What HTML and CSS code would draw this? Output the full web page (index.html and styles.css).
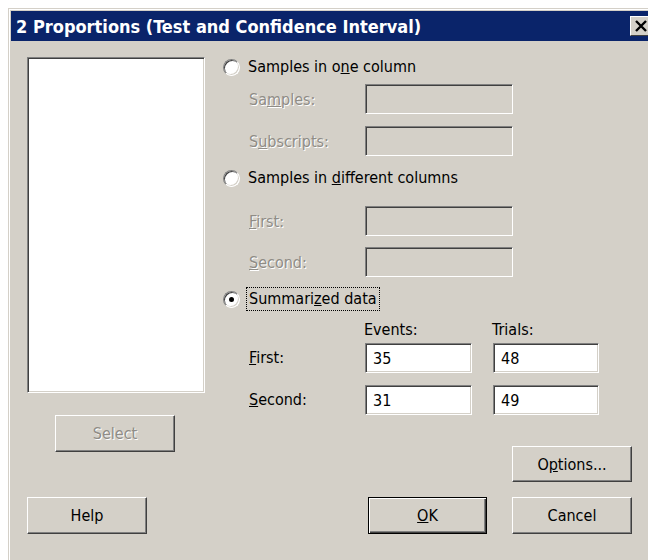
FILE: index.html
```html
<!DOCTYPE html>
<html lang="en">
<head>
<meta charset="utf-8">
<title>2 Proportions (Test and Confidence Interval)</title>
<link rel="stylesheet" href="styles.css">
</head>
<body>
<div class="window">
  <div class="frame">
    <div class="titlebar">
      <span class="title">2 Proportions (Test and Confidence Interval)</span>
      <span class="close-btn">
        <svg width="14" height="12" viewBox="0 0 14 12"><path d="M2 1 L12 11 M12 1 L2 11" stroke="#000" stroke-width="2.4" fill="none"/></svg>
      </span>
    </div>
    <div class="client">
      <div class="main">
        <div class="left">
          <div class="listbox"></div>
          <button class="btn btn-select" disabled><span class="etched">Select</span></button>
        </div>
        <div class="right">
          <div class="option opt-one">
            <span class="radio"></span>
            <span class="option-text">Samples in o<u>n</u>e column</span>
          </div>
          <div class="field field-samples">
            <span class="label etched">Sa<u>m</u>ples:</span>
            <span class="edit edit-disabled"></span>
          </div>
          <div class="field field-subscripts">
            <span class="label etched">S<u>u</u>bscripts:</span>
            <span class="edit edit-disabled"></span>
          </div>
          <div class="option opt-diff">
            <span class="radio"></span>
            <span class="option-text">Samples in <u>d</u>ifferent columns</span>
          </div>
          <div class="field field-first">
            <span class="label etched"><u>F</u>irst:</span>
            <span class="edit edit-disabled"></span>
          </div>
          <div class="field field-second">
            <span class="label etched"><u>S</u>econd:</span>
            <span class="edit edit-disabled"></span>
          </div>
          <div class="option opt-sum">
            <span class="radio radio-checked"></span>
            <span class="option-text focused">Summari<u>z</u>ed data</span>
          </div>
          <div class="summary">
            <span></span>
            <span class="col-head">Events:</span>
            <span class="col-head">Trials:</span>
            <span class="label"><u>F</u>irst:</span>
            <span class="edit">35</span>
            <span class="edit">48</span>
            <span class="label row2"><u>S</u>econd:</span>
            <span class="edit row2">31</span>
            <span class="edit row2">49</span>
          </div>
          <button class="btn btn-options">O<u>p</u>tions...</button>
        </div>
      </div>
      <div class="footer">
        <button class="btn">Help</button>
        <button class="btn btn-default"><u>O</u>K</button>
        <button class="btn">Cancel</button>
      </div>
    </div>
  </div>
</div>
</body>
</html>
```

FILE: styles.css
```css
html, body {
  margin: 0;
  padding: 0;
  background: #ffffff;
  overflow: hidden;
}

body {
  font-family: "DejaVu Sans Condensed", "DejaVu Sans", sans-serif;
  font-stretch: condensed;
  font-size: 16px;
  color: #000;
}

/* window chrome */
.window {
  margin: 8px 0 0 8px;
  width: 639px;
  height: 551px;
  overflow: hidden;
  background: #d4d0c8;
  border-top: 1px solid #d4d0c8;
  border-left: 1px solid #d4d0c8;
}

.frame {
  height: 100%;
  box-sizing: border-box;
  border-top: 1px solid #ffffff;
  border-left: 1px solid #ffffff;
  padding: 1px 0 0 1px;
}

.titlebar {
  height: 30px;
  background: #0a246a;
  display: flex;
  align-items: center;
  padding-left: 5px;
  overflow: hidden;
}

.title {
  color: #fff;
  font-weight: bold;
  font-size: 18px;
  white-space: nowrap;
}

/* close box, partly cut off by the window edge */
.close-btn {
  margin-left: auto;
  margin-right: -4px;
  width: 22px;
  height: 20px;
  flex: none;
  box-sizing: border-box;
  background: #d4d0c8;
  border: 1px solid;
  border-color: #fff #404040 #404040 #fff;
  display: flex;
  align-items: center;
  padding-left: 3px;
}

/* client area */
.client {
  padding: 16px 0 0 16px;
}

.main {
  width: 605px;
  display: flex;
  gap: 18px;
}

.left {
  width: 178px;
  display: flex;
  flex-direction: column;
}

.listbox {
  height: 336px;
  box-sizing: border-box;
  background: #fff;
  border: 1px solid;
  border-color: #808080 #fff #fff #808080;
  box-shadow: inset 1px 1px 0 #404040, inset -1px -1px 0 #d4d0c8;
}

.right {
  flex: 1;
  display: flex;
  flex-direction: column;
}

/* radio options */
.option {
  display: flex;
  align-items: center;
  height: 18px;
}

.opt-one { margin-top: 1px; }
.opt-diff { margin-top: 13px; }
.opt-sum { margin-top: 10px; height: 24px; }

.radio {
  width: 17px;
  height: 17px;
  box-sizing: border-box;
  border-radius: 50%;
  background: #fff;
  border: 1px solid;
  border-color: #808080 #fff #fff #808080;
  box-shadow: inset 1px 1px 0 #404040, inset -1px -1px 0 #d4d0c8;
  display: flex;
  align-items: center;
  justify-content: center;
  flex: none;
}

.radio-checked::after {
  content: "";
  width: 5px;
  height: 5px;
  border-radius: 50%;
  background: #000;
}

.option-text {
  margin-left: 8px;
  line-height: 18px;
}

.option-text.focused {
  margin-left: 6px;
  padding: 2px;
  border: 1px dotted #000;
}

/* labelled edit fields */
.field {
  display: flex;
  align-items: center;
  padding-left: 26px;
}

.field-samples { margin-top: 8px; }
.field-subscripts { margin-top: 12px; }
.field-first { margin-top: 19px; }
.field-second { margin-top: 11px; }

.label {
  width: 116px;
}

.etched {
  color: #8f8c86;
  text-shadow: 1px 1px 0 #fff;
}

.edit {
  height: 30px;
  box-sizing: border-box;
  background: #fff;
  border: 1px solid;
  border-color: #808080 #fff #fff #808080;
  box-shadow: inset 1px 1px 0 #404040, inset -1px -1px 0 #d4d0c8;
  display: flex;
  align-items: center;
  padding-left: 7px;
}

.field .edit { width: 148px; }

.edit-disabled { background: #d4d0c8; }

/* summarized data grid */
.summary {
  margin-top: 9px;
  padding-left: 26px;
  display: grid;
  grid-template-columns: 95px 107px 106px;
  column-gap: 21px;
  grid-template-rows: 18px 30px 37px;
  row-gap: 5px;
  align-items: center;
}

.summary .row2 {
  align-self: end;
}

.summary .label {
  width: auto;
  line-height: 30px;
}

.col-head {
  margin-left: -1px;
}

/* push buttons */
.btn {
  font: inherit;
  color: #000;
  background: #d4d0c8;
  width: 120px;
  height: 37px;
  padding: 0;
  box-sizing: border-box;
  border: 1px solid;
  border-color: #fff #404040 #404040 #fff;
  box-shadow: inset -1px -1px 0 #808080;
  border-radius: 0;
}

.btn-select {
  margin-top: 22px;
  margin-left: 28px;
}

.btn-options {
  margin-top: 31px;
  align-self: flex-end;
  height: 36px;
}

.btn-default {
  border: 1px solid #000;
  box-shadow: inset 1px 1px 0 #fff, inset -1px -1px 0 #404040, inset -2px -2px 0 #808080;
  width: 119px;
  margin-left: auto;
  margin-right: 25px;
}

.footer {
  width: 605px;
  margin-top: 15px;
  display: flex;
}
```
